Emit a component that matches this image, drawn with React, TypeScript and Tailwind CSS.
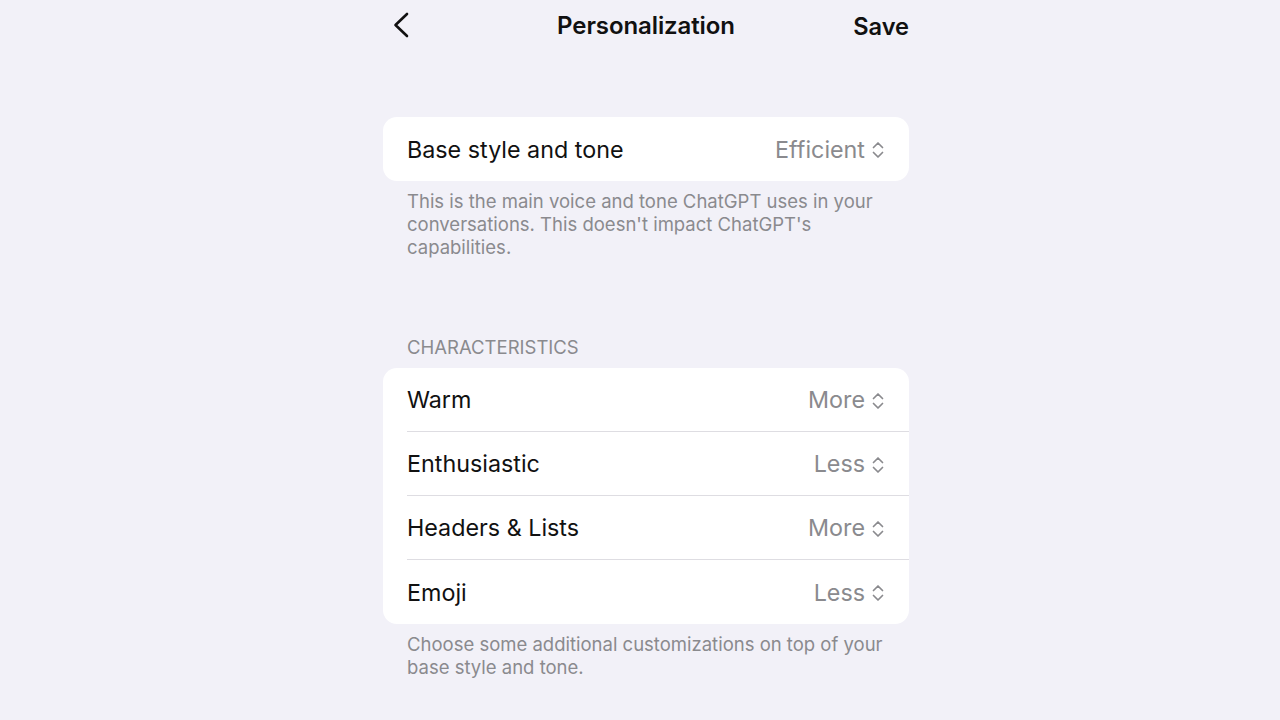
import React from "react";

const Chevrons = () => (
  <svg width="14" height="20" viewBox="0 0 14 20" fill="none" className="ml-[6px]">
    <path d="M2.5 7.5 L7 3 L11.5 7.5" stroke="#8a8a8e" strokeWidth="1.7" strokeLinecap="round" strokeLinejoin="round" />
    <path d="M2.5 12.5 L7 17 L11.5 12.5" stroke="#8a8a8e" strokeWidth="1.7" strokeLinecap="round" strokeLinejoin="round" />
  </svg>
);

const Row = ({ label, value, divider }: { label: string; value: string; divider?: boolean }) => (
  <div className="pl-6">
    <div className={`h-16 flex items-center justify-between pr-6 pt-[2px] ${divider ? "border-b border-[#dedde2]" : ""}`}>
      <span className="text-[23.3px] text-[#111111]">{label}</span>
      <span className="flex items-center text-[23.3px] text-[#8a8a8e]">
        {value}
        <Chevrons />
      </span>
    </div>
  </div>
);

export default function App() {
  return (
    <div
      className="w-[1280px] h-[720px] bg-[#f2f1f8] overflow-hidden flex justify-center pl-[12px]"
      style={{ fontFamily: "Inter, 'Noto Sans', sans-serif" }}
    >
      <div className="w-[526px] flex flex-col">
        <div className="h-[52px] flex items-center justify-between relative">
          <svg width="30" height="32" viewBox="0 0 30 32" fill="none" className="ml-[4px] -mt-[2px]">
            <path d="M20 5 L8.5 16 L20 27" stroke="#111" strokeWidth="2.6" strokeLinecap="round" strokeLinejoin="round" />
          </svg>
          <div className="absolute left-0 right-0 text-center text-[24px] font-semibold text-[#111] tracking-[-0.1px] -mt-[1px] pointer-events-none">
            Personalization
          </div>
          <span className="text-[23.6px] font-semibold text-[#111] mt-[1px]">Save</span>
        </div>

        <div className="mt-[65px] bg-white rounded-[14px]">
          <Row label="Base style and tone" value="Efficient" />
        </div>
        <p className="px-6 mt-[9px] text-[18.5px] leading-[23px] text-[#8a8a8e]">
          This is the main voice and tone ChatGPT uses in your conversations. This doesn't impact ChatGPT's capabilities.
        </p>

        <div className="px-6 mt-[77px] text-[18.5px] leading-[23px] text-[#8a8a8e] uppercase">Characteristics</div>
        <div className="mt-[9px] bg-white rounded-[14px]">
          <Row label="Warm" value="More" divider />
          <Row label="Enthusiastic" value="Less" divider />
          <Row label="Headers & Lists" value="More" divider />
          <Row label="Emoji" value="Less" />
        </div>
        <p className="px-6 mt-[9px] text-[18.5px] leading-[23px] text-[#8a8a8e]">
          Choose some additional customizations on top of your base style and tone.
        </p>
      </div>
    </div>
  );
}
